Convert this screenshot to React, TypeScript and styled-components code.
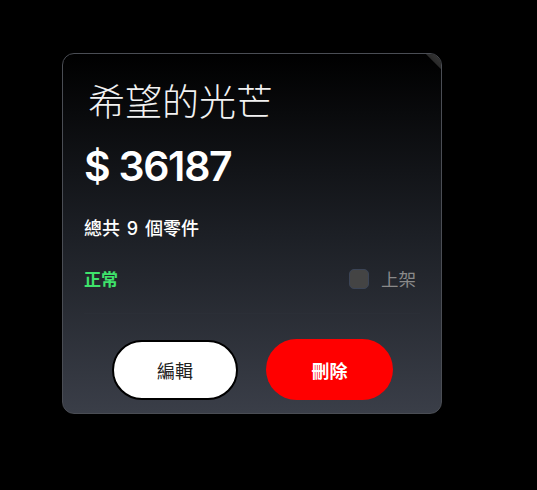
import React from "react";
import styled, { createGlobalStyle } from "styled-components";

const Global = createGlobalStyle`
  html, body { margin: 0; padding: 0; background: #000; }
  body { font-family: "Inter", "Noto Sans CJK TC", sans-serif; }
`;

const Page = styled.div`
  width: 537px;
  height: 490px;
  background: #000;
  padding: 53px 0 0 62px;
  box-sizing: border-box;
`;

const Card = styled.div`
  position: relative;
  width: 380px;
  height: 361px;
  box-sizing: border-box;
  border: 1px solid #4a4d54;
  border-radius: 12px;
  background: linear-gradient(180deg, #000 0%, #1c1f25 50%, #3a3e48 100%);
  padding: 20px 21px 0 21px;
  display: flex;
  flex-direction: column;
  overflow: hidden;
  &::after {
    content: "";
    position: absolute;
    top: 0;
    right: 0;
    width: 16px;
    height: 16px;
    background: linear-gradient(225deg, #3a3a3a 0%, #2a2a2a 45%, transparent 50%);
  }
`;

const Title = styled.div`
  font-family: "Noto Sans CJK TC", sans-serif;
  font-weight: 300;
  font-size: 37px;
  line-height: 52px;
  color: #f2f2f2;
  padding-left: 4px;
`;

const Price = styled.div`
  margin-top: 12px;
  font-family: "Inter", sans-serif;
  font-weight: 600;
  font-size: 41px;
  letter-spacing: -1.3px;
  line-height: 56px;
  color: #fff;
`;

const Parts = styled.div`
  margin-top: 23px;
  font-family: "Inter", "Noto Sans CJK TC", sans-serif;
  font-size: 18px;
  font-weight: 500;
  line-height: 24px;
  color: #fff;
  word-spacing: 2px;
`;

const StatusRow = styled.div`
  margin-top: 26px;
  display: flex;
  align-items: center;
  justify-content: space-between;
  height: 24px;
  padding-bottom: 22px;
  border-bottom: 1px solid #2b2f37;
`;

const Status = styled.span`
  font-family: "Noto Sans CJK TC", sans-serif;
  font-weight: 700;
  font-size: 17px;
  line-height: 24px;
  color: #3fe36b;
`;

const Shelf = styled.label`
  display: flex;
  align-items: center;
  gap: 12px;
  font-family: "Noto Sans CJK TC", sans-serif;
  font-size: 17.5px;
  line-height: 24px;
  color: #8a8a8a;
  margin-right: 4px;
`;

const Box = styled.span`
  width: 20px;
  height: 20px;
  box-sizing: border-box;
  border-radius: 5px;
  background: #444;
  border: 1px solid #3b4456;
`;

const Actions = styled.div`
  display: flex;
  justify-content: center;
  align-items: center;
  gap: 28px;
  margin-top: 25px;
  padding-left: 1px;
`;

const Button = styled.button<{ $danger?: boolean }>`
  width: ${(p) => (p.$danger ? "127px" : "126px")};
  height: ${(p) => (p.$danger ? "61px" : "60px")};
  box-sizing: border-box;
  border-radius: 31px;
  border: ${(p) => (p.$danger ? "none" : "2px solid #000")};
  background: ${(p) => (p.$danger ? "#ff0000" : "#fff")};
  color: ${(p) => (p.$danger ? "#fff" : "#222")};
  font-family: "Noto Sans CJK TC", sans-serif;
  font-weight: ${(p) => (p.$danger ? 700 : 400)};
  font-size: 18px;
  padding: 0;
`;

export default function App() {
  return (
    <Page>
      <Global />
      <Card>
        <Title>希望的光芒</Title>
        <Price>$ 36187</Price>
        <Parts>總共 9 個零件</Parts>
        <StatusRow>
          <Status>正常</Status>
          <Shelf>
            <Box />
            上架
          </Shelf>
        </StatusRow>
        <Actions>
          <Button>編輯</Button>
          <Button $danger>刪除</Button>
        </Actions>
      </Card>
    </Page>
  );
}
